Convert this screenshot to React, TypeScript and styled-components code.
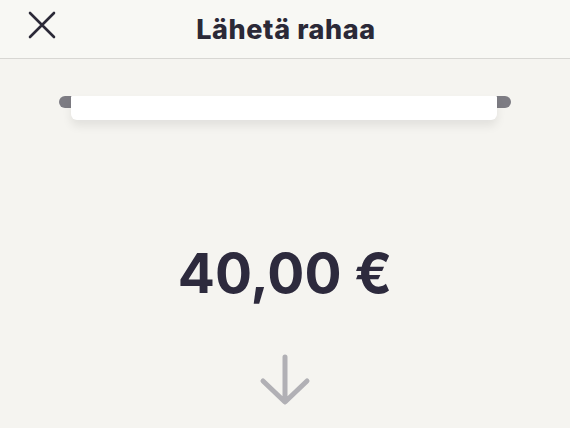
import styled, { createGlobalStyle } from "styled-components";

const GlobalStyle = createGlobalStyle`
  html, body {
    margin: 0;
    padding: 0;
    background: #f5f4f0;
  }
  body {
    font-family: Inter, "Noto Sans", sans-serif;
    color: #2b2937;
  }
`;

const CloseIcon = () => (
  <svg width="28" height="28" viewBox="0 0 28 28" fill="none">
    <path d="M2 2 L26 26 M26 2 L2 26" stroke="#2b2937" strokeWidth="2.6" strokeLinecap="round" />
  </svg>
);

const ArrowDown = () => (
  <svg width="52" height="52" viewBox="0 0 52 52" fill="none">
    <path
      d="M26 3 V47 M4 27 L26 48 L48 27"
      stroke="#b1b0b5"
      strokeWidth="5"
      strokeLinecap="round"
      strokeLinejoin="round"
    />
  </svg>
);

const App = () => {
  return (
    <Page>
      <GlobalStyle />
      <Header>
        <CloseButton aria-label="Sulje">
          <CloseIcon />
        </CloseButton>
        <Title>Lähetä rahaa</Title>
      </Header>
      <Body>
        <Slot>
          <Rail />
          <Card />
        </Slot>
        <Amount>40,00 €</Amount>
        <ArrowWrap>
          <ArrowDown />
        </ArrowWrap>
      </Body>
    </Page>
  );
};

export default App;

const Page = styled.div`
  width: 570px;
  height: 428px;
  overflow: hidden;
  display: flex;
  flex-direction: column;
  background: #f5f4f0;
`;

const Header = styled.header`
  position: relative;
  height: 58px;
  display: flex;
  align-items: center;
  justify-content: center;
  background: #f8f8f4;
  border-bottom: 1px solid #d8d7d3;
`;

const CloseButton = styled.button`
  position: absolute;
  left: 28px;
  top: 11px;
  padding: 0;
  border: none;
  background: none;
  display: flex;
`;

const Title = styled.h1`
  margin: 0 0 0 2px;
  font-size: 27px;
  font-weight: 800;
  letter-spacing: 0.6px;
  color: #2b2937;
`;

const Body = styled.main`
  display: flex;
  flex-direction: column;
  align-items: center;
  padding-top: 37px;
`;

const Slot = styled.div`
  position: relative;
  width: 452px;
  height: 26px;
`;

const Rail = styled.div`
  height: 12px;
  border-radius: 6px;
  background: #7d7c83;
`;

const Card = styled.div`
  position: absolute;
  left: 12px;
  right: 14px;
  top: 0;
  height: 24px;
  background: #ffffff;
  border-radius: 1px 1px 6px 6px;
  box-shadow: 0 6px 10px rgba(0, 0, 0, 0.08);
`;

const Amount = styled.div`
  margin-top: 124px;
  font-size: 55px;
  font-weight: 700;
  line-height: 1;
  letter-spacing: 0px;
  color: #2d2a3d;
`;

const ArrowWrap = styled.div`
  margin-top: 53px;
  display: flex;
`;
